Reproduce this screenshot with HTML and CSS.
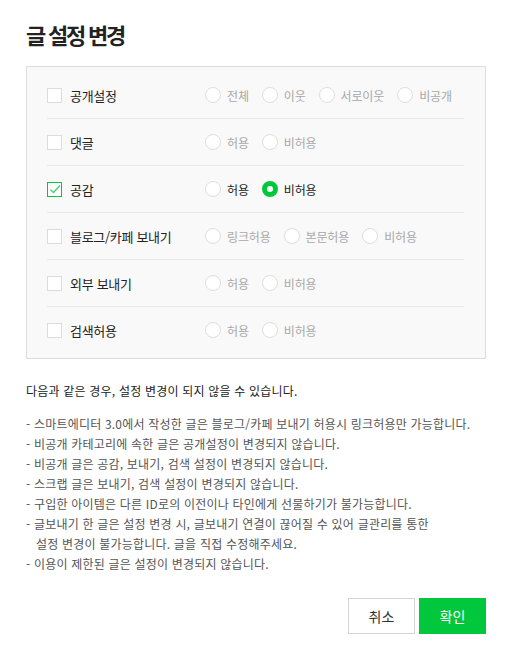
FILE: index.html
```html
<!DOCTYPE html>
<html lang="ko">
<head>
<meta charset="utf-8">
<title>글 설정 변경</title>
<link rel="stylesheet" href="styles.css">
</head>
<body>
<div class="dialog">
  <h1 class="title">글 설정 변경</h1>

  <div class="settings">
    <div class="row">
      <label class="opt"><span class="check"></span><span class="label">공개설정</span></label>
      <div class="radios disabled">
        <span class="radio"><span class="dot"></span>전체</span>
        <span class="radio"><span class="dot"></span>이웃</span>
        <span class="radio"><span class="dot"></span>서로이웃</span>
        <span class="radio"><span class="dot"></span>비공개</span>
      </div>
    </div>
    <div class="row">
      <label class="opt"><span class="check"></span><span class="label">댓글</span></label>
      <div class="radios disabled">
        <span class="radio"><span class="dot"></span>허용</span>
        <span class="radio"><span class="dot"></span>비허용</span>
      </div>
    </div>
    <div class="row">
      <label class="opt"><span class="check checked"><svg width="15" height="15" viewBox="0 0 15 15"><rect x="0.5" y="0.5" width="14" height="14" fill="#fff" stroke="#00c73c"/><polyline points="3.5,7.8 6.5,10.6 13,3.6" fill="none" stroke="#45d36c" stroke-width="1.4"/></svg></span><span class="label">공감</span></label>
      <div class="radios">
        <span class="radio"><span class="dot"></span>허용</span>
        <span class="radio on"><span class="dot"></span>비허용</span>
      </div>
    </div>
    <div class="row">
      <label class="opt"><span class="check"></span><span class="label">블로그/카페 보내기</span></label>
      <div class="radios disabled">
        <span class="radio"><span class="dot"></span>링크허용</span>
        <span class="radio"><span class="dot"></span>본문허용</span>
        <span class="radio"><span class="dot"></span>비허용</span>
      </div>
    </div>
    <div class="row">
      <label class="opt"><span class="check"></span><span class="label">외부 보내기</span></label>
      <div class="radios disabled">
        <span class="radio"><span class="dot"></span>허용</span>
        <span class="radio"><span class="dot"></span>비허용</span>
      </div>
    </div>
    <div class="row">
      <label class="opt"><span class="check"></span><span class="label">검색허용</span></label>
      <div class="radios disabled">
        <span class="radio"><span class="dot"></span>허용</span>
        <span class="radio"><span class="dot"></span>비허용</span>
      </div>
    </div>
  </div>

  <p class="notice">다음과 같은 경우, 설정 변경이 되지 않을 수 있습니다.</p>
  <ul class="notes">
    <li>- 스마트에디터 3.0에서 작성한 글은 블로그/카페 보내기 허용시 링크허용만 가능합니다.</li>
    <li>- 비공개 카테고리에 속한 글은 공개설정이 변경되지 않습니다.</li>
    <li>- 비공개 글은 공감, 보내기, 검색 설정이 변경되지 않습니다.</li>
    <li>- 스크랩 글은 보내기, 검색 설정이 변경되지 않습니다.</li>
    <li>- 구입한 아이템은 다른 ID로의 이전이나 타인에게 선물하기가 불가능합니다.</li>
    <li>- 글보내기 한 글은 설정 변경 시, 글보내기 연결이 끊어질 수 있어 글관리를 통한<br>설정 변경이 불가능합니다. 글을 직접 수정해주세요.</li>
    <li>- 이용이 제한된 글은 설정이 변경되지 않습니다.</li>
  </ul>

  <div class="buttons">
    <button class="btn cancel">취소</button>
    <button class="btn ok">확인</button>
  </div>
</div>
</body>
</html>
```

FILE: styles.css
```css
* { box-sizing: border-box; }
body {
  margin: 0;
  background: #fff;
  font-family: "Noto Sans CJK KR", "Noto Sans", sans-serif;
  color: #222;
}
.dialog {
  padding: 18px 27px 26px 26px;
}
.title {
  margin: 0;
  font-size: 22px;
  line-height: 32px;
  font-weight: bold;
  letter-spacing: -0.1em;
  color: #222;
}
.settings {
  margin-top: 16px;
  border: 1px solid #dcdcdc;
  background: #f9f9f9;
  padding: 5px 21px 5px 20px;
}
.row {
  display: flex;
  align-items: center;
  height: 47px;
  border-top: 1px solid #e8e8e8;
}
.row:first-child { border-top: none; height: 46px; }
.opt {
  width: 158px;
  flex: none;
  display: flex;
  align-items: center;
}
.check {
  width: 15px;
  height: 15px;
  flex: none;
  border: 1px solid #dcdcdc;
  background: #fff;
  display: block;
}
.check.checked { border: none; background: none; }
.check svg { display: block; }
.label {
  margin-left: 8px;
  font-size: 13px;
  letter-spacing: -0.3px;
  white-space: nowrap;
  color: #222;
}
.radios {
  display: flex;
  align-items: center;
  font-size: 12px;
  letter-spacing: -0.15px;
  white-space: nowrap;
  color: #222;
}
.radios.disabled { color: #a8a8a8; }
.radio {
  display: flex;
  align-items: center;
  flex: none;
  margin-right: 13px;
}
.radio:last-child { margin-right: 0; }
.dot {
  width: 16px;
  height: 16px;
  border-radius: 50%;
  border: 1px solid #dedede;
  background: #fff;
  margin-right: 6px;
  flex: none;
}
.radio.on .dot {
  border: 5px solid #00c73c;
  background: #fff;
}
.notice {
  margin: 22px 0 0;
  font-size: 12px;
  line-height: 20px;
  letter-spacing: 0.2px;
  color: #222;
}
.notes {
  list-style: none;
  margin: 13px 0 0;
  padding: 0;
  font-size: 12px;
  line-height: 20px;
  letter-spacing: 0.2px;
  color: #555;
}
.notes li {
  padding-left: 10px;
  text-indent: -10px;
}
.buttons {
  margin-top: 24px;
  display: flex;
  justify-content: flex-end;
  gap: 4px;
}
.btn {
  width: 67px;
  height: 36px;
  font-family: inherit;
  font-size: 14px;
  letter-spacing: 0;
  cursor: pointer;
}
.cancel {
  background: #fff;
  border: 1px solid #d5d5d5;
  color: #333;
}
.ok {
  background: #00c73c;
  border: none;
  color: #fff;
}
```
